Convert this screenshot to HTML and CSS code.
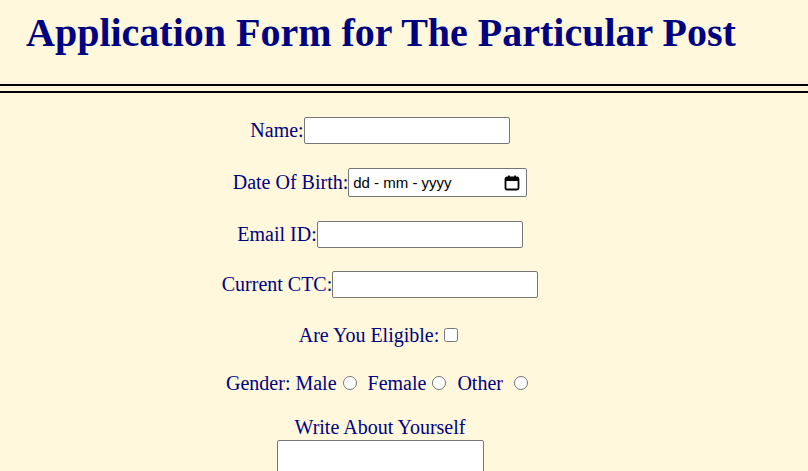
FILE: index.html
```html
<!DOCTYPE html>
<html lang="en">
<head>
<meta charset="utf-8">
<title>Application Form</title>
<link rel="stylesheet" href="styles.css">
</head>
<body>
<header class="header">
  <h1 class="title">Application Form for The Particular Post</h1>
</header>
<div class="rule"></div>
<form class="form">
  <div class="row row-1"><label for="name">Name:</label><input class="field" type="text" id="name"></div>
  <div class="row row-2"><label>Date Of Birth:</label><div class="field date-field"><span class="date-text">dd - mm - yyyy</span><svg class="cal" width="16" height="16" viewBox="0 0 16 16"><rect x="1.5" y="2.5" width="13" height="12" rx="1.5" fill="none" stroke="#000" stroke-width="1.8"/><rect x="1.5" y="3" width="13" height="3" fill="#000"/><rect x="4" y="0.5" width="1.8" height="3" fill="#000"/><rect x="10.2" y="0.5" width="1.8" height="3" fill="#000"/></svg></div></div>
  <div class="row row-3"><label for="email">Email ID:</label><input class="field" type="text" id="email"></div>
  <div class="row row-4"><label for="ctc">Current CTC:</label><input class="field" type="text" id="ctc"></div>
  <div class="line line-5">Are You Eligible:<input type="checkbox" class="check"></div>
  <div class="line line-6">Gender: Male<input type="radio" name="g" class="radio"> Female<input type="radio" name="g" class="radio"> Other <input type="radio" name="g" class="radio"></div>
  <div class="line line-7">Write About Yourself</div>
  <textarea class="about"></textarea>
</form>
</body>
</html>
```

FILE: styles.css
```css
html, body {
  margin: 0;
  padding: 0;
  background: #fff8dc;
}
body {
  font-family: "Liberation Serif", "Times New Roman", serif;
  color: #000080;
}
.header {
  padding: 10px 0 28px 26px;
}
.title {
  margin: 0;
  font-size: 40px;
  line-height: 46px;
  font-weight: bold;
  color: #000080;
}
.rule {
  height: 5px;
  border-top: 2px solid #000;
  border-bottom: 2px solid #000;
}
.form {
  display: flex;
  flex-direction: column;
  align-items: center;
  padding-right: 48px;
  font-size: 20px;
}
.row {
  display: flex;
  align-items: center;
  justify-content: center;
  line-height: 23px;
}
.row-1 { margin-top: 24px; }
.row-2 { margin-top: 24px; }
.row-3 { margin-top: 24px; }
.row-4 { margin-top: 23px; }
.field {
  box-sizing: border-box;
  width: 206px;
  height: 27px;
  margin: 0;
  background: #fff;
  border: 1px solid #767676;
  border-radius: 2px;
  font-family: "Liberation Sans", Arial, sans-serif;
  font-size: 15px;
}
.date-field {
  width: 179px;
  height: 29px;
  display: flex;
  align-items: center;
  justify-content: space-between;
  padding: 0 6px 0 4px;
  color: #000;
}
.cal {
  display: block;
}
.line {
  line-height: 23px;
  text-align: center;
}
.line-5 { margin-top: 26px; }
.line-6 { margin-top: 25px; }
.line-7 { margin-top: 21px; }
.check {
  margin: 3px 3px 2px 5px;
  width: 14px;
  height: 14px;
}
.radio {
  margin: 3px 6px 3px 6px;
  width: 14px;
  height: 14px;
}
.about {
  box-sizing: border-box;
  width: 207px;
  height: 52px;
  margin-top: 1px;
  background: #fff;
  border: 1px solid #767676;
  border-radius: 2px;
  resize: none;
}
```
